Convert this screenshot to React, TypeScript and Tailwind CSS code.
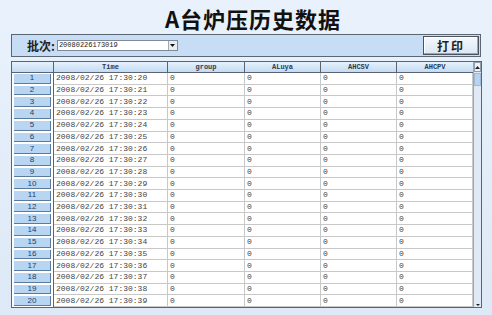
const COLS = ["group", "ALuya", "AHCSV", "AHCPV"];

const rows = Array.from({ length: 20 }, (_, i) => ({
  no: i + 1,
  time: `2008/02/26 17:30:${String(20 + i).padStart(2, "0")}`,
}));

const mono = { fontFamily: '"Liberation Mono", "DejaVu Sans Mono", monospace' };

function ScrollBar() {
  return (
    <div className="flex w-[9px] flex-col border-l border-[#9aa8b8] bg-[#dfeaf6]">
      <div className="flex h-[10px] items-center justify-center border border-[#8f9cab] bg-[#eef3f9]">
        <svg width="5" height="3" viewBox="0 0 5 3">
          <path d="M0 3 L2.5 0 L5 3 Z" fill="#222" />
        </svg>
      </div>
      <div className="mt-[1px] h-[13px] border border-[#9fb9d6] bg-[#b9d3ef]" />
      <div className="flex-1" />
      <div className="flex h-[6px] items-end justify-center pb-[1px]">
        <svg width="4" height="2" viewBox="0 0 4 2">
          <path d="M0 0 L2 2 L4 0 Z" fill="#222" />
        </svg>
      </div>
    </div>
  );
}

export default function App() {
  return (
    <div
      className="flex h-[315px] w-[492px] flex-col bg-gradient-to-b from-[#e9f2fc] to-[#dde9f6] px-[11px]"
      style={{ fontFamily: '"Liberation Sans", "Noto Sans CJK SC", sans-serif' }}
    >
      <div className="flex h-[34px] items-center justify-center pl-[14px] pt-[1px]">
        <h1
          className="text-[22px] font-bold leading-none tracking-[1px] text-[#111]"
          style={{ fontFamily: '"Noto Sans CJK SC", "Liberation Serif", serif' }}
        >
          A台炉压历史数据
        </h1>
      </div>

      <div className="flex h-[23px] w-[470px] items-center border border-[#5d6670] bg-[#c7ddf5] pl-[15px] pr-[1px]">
        <span
          className="text-[12px] font-bold leading-none text-[#222]"
          style={{ fontFamily: '"Noto Sans CJK SC", sans-serif' }}
        >
          批次:
        </span>
        <div className="ml-[2px] flex h-[11px] w-[121px] items-center border border-[#7f8a96] bg-white">
          <span className="flex-1 pl-[1px] text-[7px] leading-none text-[#222]" style={mono}>
            20080226173019
          </span>
          <div className="flex h-full w-[9px] items-center justify-center border-l border-[#a0a8b2] bg-[#e8edf2]">
            <svg width="5" height="3" viewBox="0 0 5 3">
              <path d="M0 0 L2.5 3 L5 0 Z" fill="#111" />
            </svg>
          </div>
        </div>
        <div className="flex-1" />
        <button className="flex h-[19px] w-[56px] items-center justify-center border border-[#4a5360] bg-gradient-to-b from-[#f4f8fc] to-[#dbe7f3] shadow-[inset_-1px_-1px_0_#9aa6b4,inset_1px_1px_0_#ffffff]">
          <span
            className="text-[12px] font-bold leading-none tracking-[2px] text-[#222]"
            style={{ fontFamily: '"Noto Sans CJK SC", sans-serif' }}
          >
            打印
          </span>
        </button>
      </div>

      <div className="mt-[4px] flex h-[247px] w-[471px] border border-[#5b6470] bg-white">
        <div className="flex min-h-0 flex-1 flex-col">
          <div className="grid h-[11px] shrink-0 grid-cols-[42px_114px_77px_76px_76px_76px] border-b border-[#5b6470] text-[7px] leading-none text-[#2a3a55]">
            <div className="border-r border-[#5b6470] bg-gradient-to-b from-[#e6f1fc] to-[#c3dbf3]" />
            <div className="flex items-center justify-center border-r border-[#5b6470] bg-gradient-to-b from-[#e6f1fc] to-[#c3dbf3] font-bold" style={mono}>
              Time
            </div>
            {COLS.map((c, i) => (
              <div
                key={c}
                className={`flex items-center justify-center bg-gradient-to-b from-[#e6f1fc] to-[#c3dbf3] font-bold ${
                  i < COLS.length - 1 ? "border-r border-[#5b6470]" : ""
                }`}
                style={mono}
              >
                {c}
              </div>
            ))}
          </div>
          {rows.map((r) => (
            <div
              key={r.no}
              className="grid min-h-0 flex-1 grid-cols-[42px_114px_77px_76px_76px_76px] text-[8px] leading-none text-[#444]"
            >
              <div className="flex min-h-0 items-center border-r border-[#5b6470] bg-white px-[2px] py-[1px]">
                <div className="flex h-full w-full items-center justify-center border-b border-r border-[#5a7aa0] bg-[#b8d5f2] text-[8px] text-[#23406a]">
                  {r.no}
                </div>
              </div>
              <div className="flex min-h-0 items-center border-b border-r border-[#c8c8c8] pl-[2px]" style={mono}>
                {r.time}
              </div>
              {COLS.map((c) => (
                <div
                  key={c}
                  className="flex min-h-0 items-center border-b border-r border-[#c8c8c8] pl-[2px]"
                  style={mono}
                >
                  0
                </div>
              ))}
            </div>
          ))}
        </div>
        <ScrollBar />
      </div>
    </div>
  );
}
